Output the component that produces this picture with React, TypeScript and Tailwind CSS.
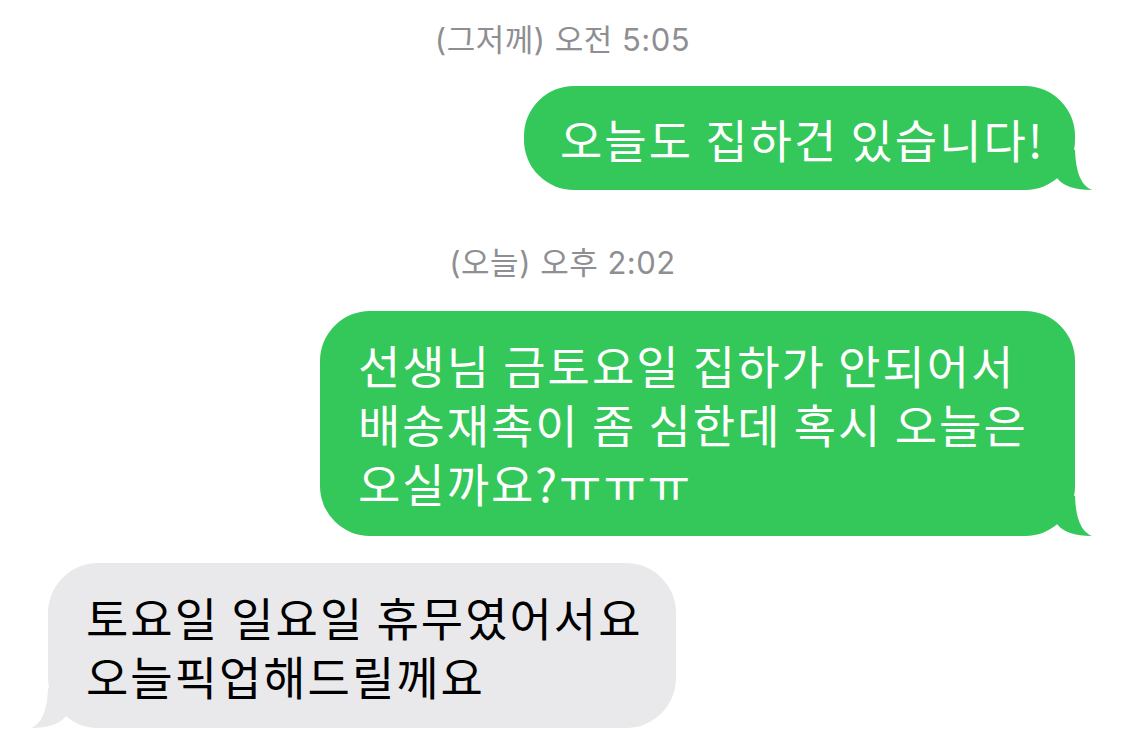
const font = { fontFamily: '"Noto Sans CJK KR", "Noto Sans", sans-serif' };
const stampFont = { fontFamily: 'Inter, "Noto Sans CJK KR", sans-serif' };

function Tail({ color, side }: { color: string; side: "left" | "right" }) {
    return (
        <svg
            width="55"
            height="40"
            viewBox="0 0 55 40"
            className={side === "right" ? "absolute right-[-20px] bottom-0" : "absolute left-[-20px] bottom-0 -scale-x-100"}
        >
            <path d="M17 28 Q26 40 52 40 Q36 34 35 0 L17 0 Z" fill={color}/>
        </svg>
    );
}

function Stamp({ text, className }: { text: string; className: string }) {
    return (
        <div className={`h-[40px] text-center text-[31px] leading-[39px] tracking-[0.5px] text-[#8e8e93] ${className}`} style={stampFont}>
            {text}
        </div>
    );
}

export default function App() {
    return (
        <div className="w-[1125px] h-[744px] overflow-hidden bg-white pt-[20px] flex flex-col" style={font}>
            <Stamp text="(그저께) 오전 5:05" className=""/>

            <div className="flex justify-end pr-[50px] mt-[26px]">
                <div className="relative h-[104px] w-[551px] rounded-[50px] bg-[#34c759] flex items-center pl-[36px] text-white text-[46px] tracking-[2px] leading-[59px] whitespace-nowrap">
                    오늘도 집하건 있습니다!
                    <Tail color="#34c759" side="right"/>
                </div>
            </div>

            <Stamp text="(오늘) 오후 2:02" className="mt-[53px]"/>

            <div className="flex justify-end pr-[50px] mt-[28px]">
                <div className="relative h-[225px] w-[755px] rounded-[50px] bg-[#34c759] flex flex-col justify-center pl-[38px] text-white text-[46px] tracking-[2px] leading-[59px] whitespace-nowrap">
                    <span>선생님 금토요일 집하가 안되어서</span>
                    <span>배송재촉이 좀 심한데 혹시 오늘은</span>
                    <span>오실까요?ㅠㅠㅠ</span>
                    <Tail color="#34c759" side="right"/>
                </div>
            </div>

            <div className="flex justify-start pl-[48px] mt-[27px]">
                <div className="relative h-[165px] w-[628px] rounded-[50px] bg-[#e9e9eb] flex flex-col justify-center pl-[38px] text-black text-[46px] tracking-[2px] leading-[59px] whitespace-nowrap">
                    <span>토요일 일요일 휴무였어서요</span>
                    <span>오늘픽업해드릴께요</span>
                    <Tail color="#e9e9eb" side="left"/>
                </div>
            </div>
        </div>
    );
}
